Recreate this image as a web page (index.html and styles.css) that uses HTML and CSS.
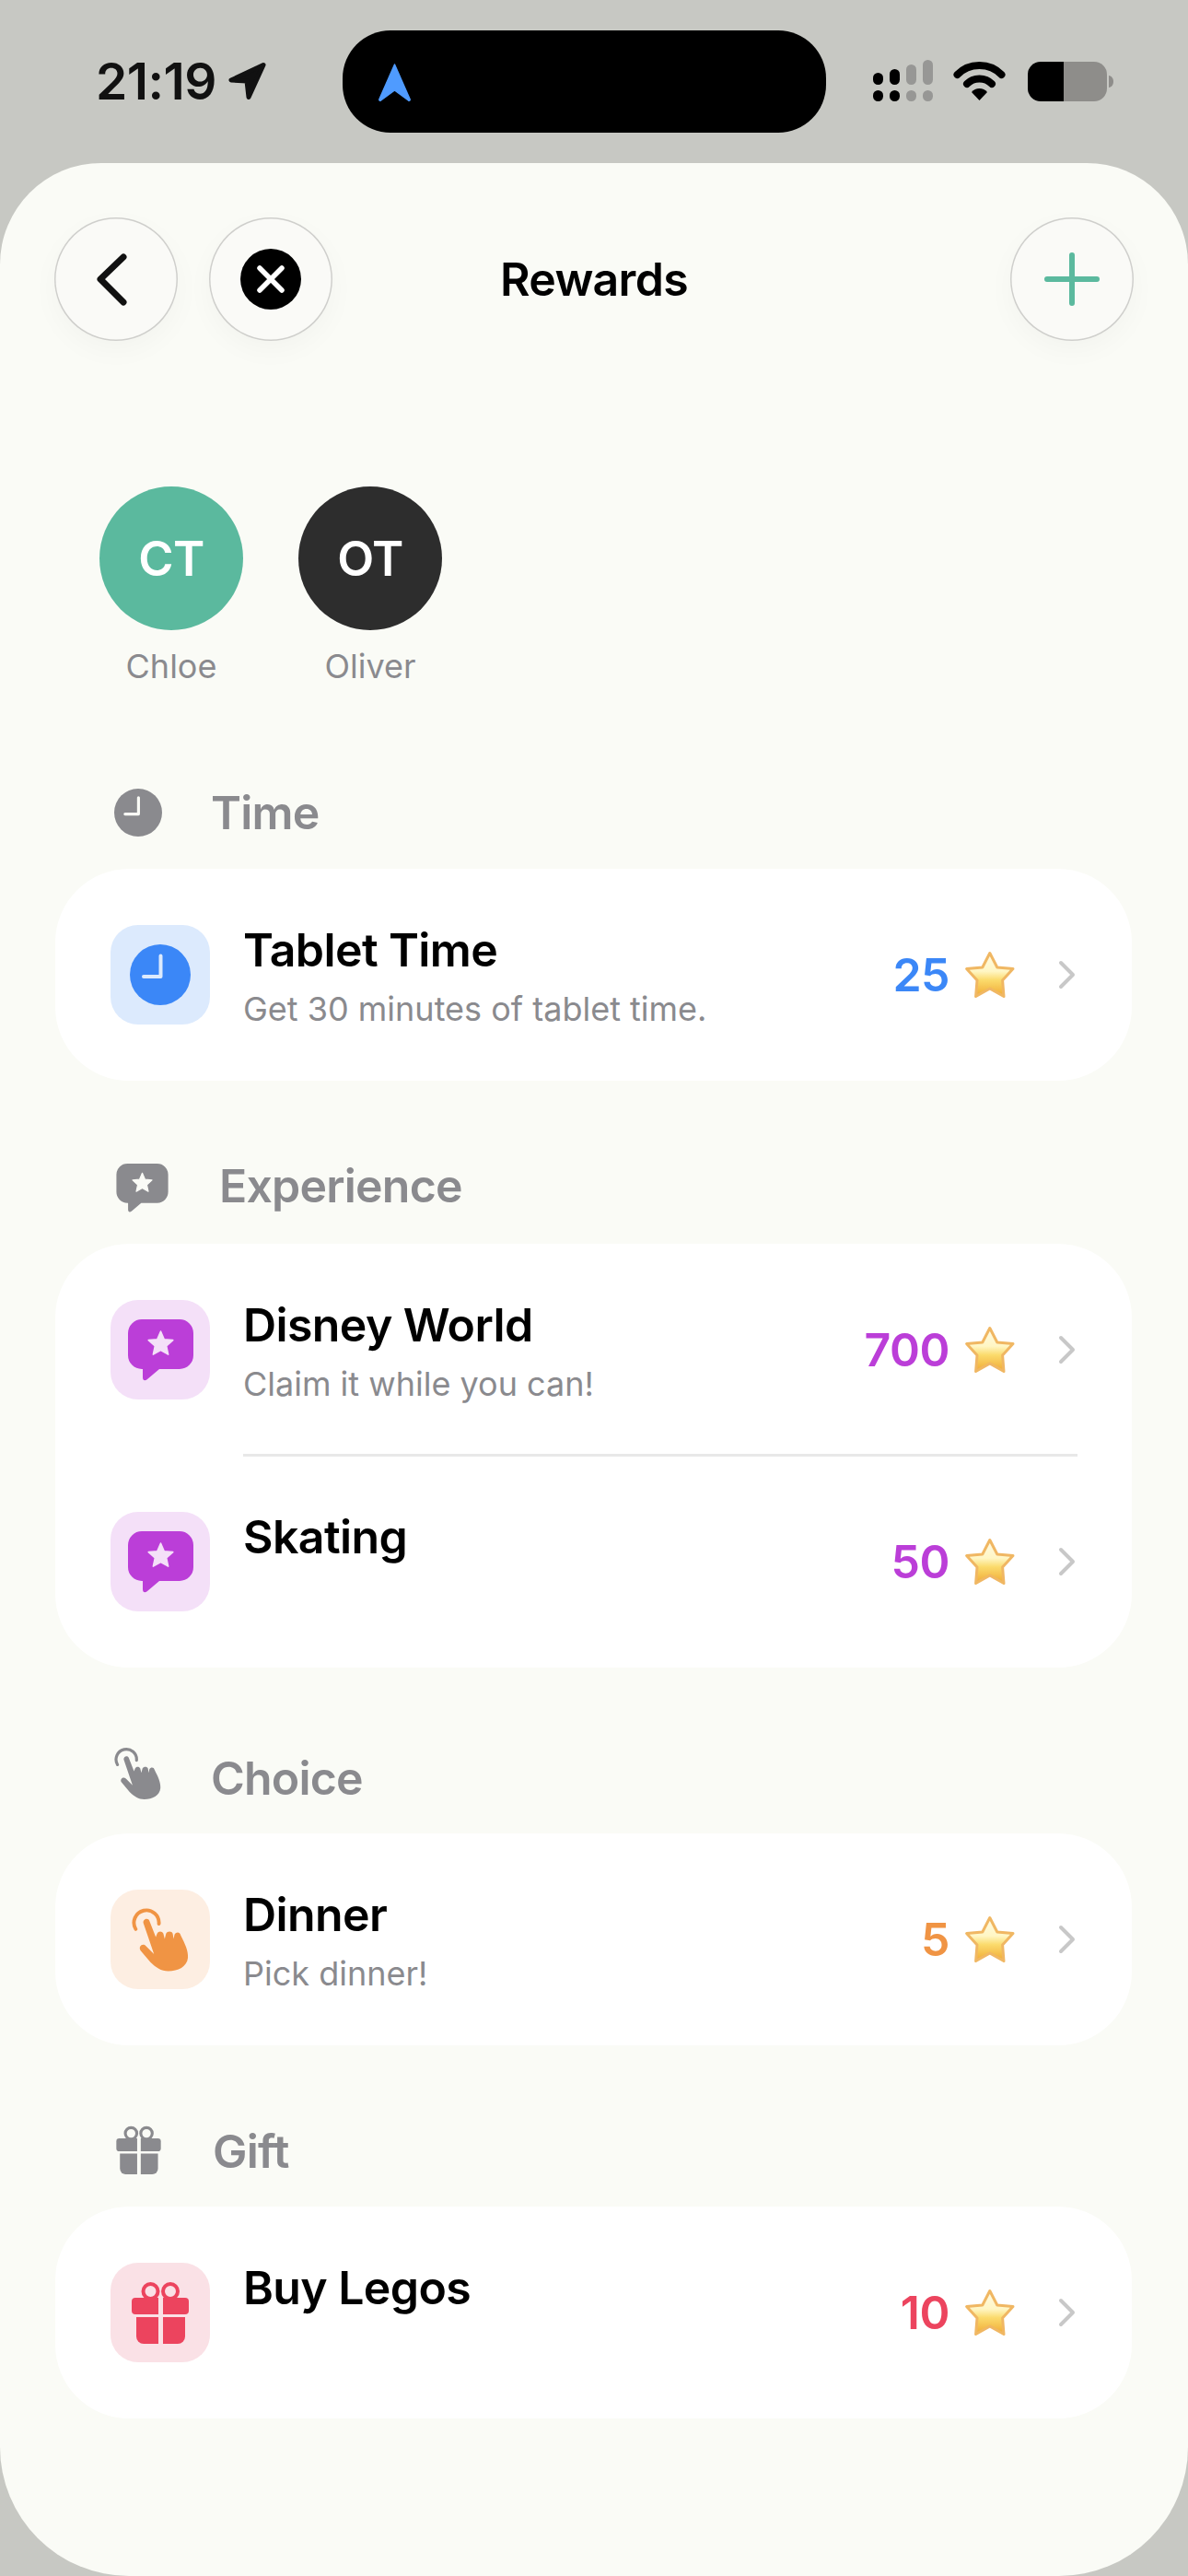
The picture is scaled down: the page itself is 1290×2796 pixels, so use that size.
FILE: index.html
```html
<!DOCTYPE html>
<html lang="en">
<head>
    <meta charset="UTF-8">
    <meta name="viewport" content="width=device-width, initial-scale=1.0">
    <title>Rewards</title>
    <link rel="stylesheet" href="styles.css">
</head>
<body>
    <svg class="defs" aria-hidden="true">
        <defs>
            <linearGradient id="starFill" x1="0" y1="0" x2="0" y2="1">
                <stop offset="0" stop-color="#fffbe6"/>
                <stop offset="0.42" stop-color="#fff6c4"/>
                <stop offset="0.62" stop-color="#fbdb6c"/>
                <stop offset="1" stop-color="#f0a934"/>
            </linearGradient>
            <symbol id="star" viewBox="0 0 56 52">
                <path d="M27.8 2.5 L35.8 18 L53 19.6 L41.6 32 L43 49.5 L27.8 41 L12.6 49.5 L14 32 L2.6 19.6 L19.8 18 Z" fill="url(#starFill)" stroke="#f0b763" stroke-width="3" stroke-linejoin="round"/>
            </symbol>
            <symbol id="clock" viewBox="0 0 66 66">
                <circle cx="33" cy="33" r="33" fill="currentColor"/>
                <path d="M33.5 12.5 V35 H15" fill="none" stroke="var(--hole)" stroke-width="4" stroke-linecap="round" stroke-linejoin="round"/>
            </symbol>
            <symbol id="bubble" viewBox="0 0 71 67">
                <path d="M15 0 H56 A15 15 0 0 1 71 15 V39 A15 15 0 0 1 56 54 H34 L21 65 C18.5 67.2 16 66.5 16 63 V54 H15 A15 15 0 0 1 0 39 V15 A15 15 0 0 1 15 0 Z" fill="currentColor"/>
                <path d="M35.5 13 L39.3 21.7 L48.8 22.6 L41.7 29 L43.7 38.2 L35.5 33.5 L27.3 38.2 L29.3 29 L22.2 22.6 L31.7 21.7 Z" fill="var(--hole)" stroke="var(--hole)" stroke-width="1.5" stroke-linejoin="round"/>
            </symbol>
            <symbol id="hand" viewBox="0 0 64 72">
                <path d="M4.5 24 A14 14 0 1 1 30.5 18" fill="none" stroke="currentColor" stroke-width="4" stroke-linecap="round"/>
                <path d="M13 17 C12.5 12.5 18.5 10.5 20 15 L27 33 L28.5 29 C30 26 34 26 35.5 29 L37 35 L38.5 29 C40 26 45 26 46 29 L47 35 L48 30 C50 27 54 27 55 31 C60 41 63.5 48 63 56 C62 66 52 71 41 71 C33 71 27 67 21 61 L10 48 C7 44 12 39 16 43 L25 52 Z" fill="currentColor"/>
            </symbol>
            <symbol id="gift" viewBox="0 0 62 68">
                <circle cx="20.5" cy="11" r="8" fill="none" stroke="currentColor" stroke-width="4"/>
                <circle cx="42" cy="11" r="8" fill="none" stroke="currentColor" stroke-width="4"/>
                <rect x="0" y="18" width="62" height="18" rx="4" fill="currentColor"/>
                <path d="M5 39 H58 V60 A8 8 0 0 1 50 68 H13 A8 8 0 0 1 5 60 Z" fill="currentColor"/>
                <rect x="29" y="17" width="5" height="51" fill="var(--hole)"/>
            </symbol>
            <symbol id="chevron" viewBox="0 0 20 34">
                <path d="M4 4 L17 17 L4 30" fill="none" stroke="#c8c8c8" stroke-width="4" stroke-linecap="round" stroke-linejoin="round"/>
            </symbol>
        </defs>
    </svg>

    <div class="status">
        <span class="clock-time">21:19</span>
        <svg class="loc" width="41" height="41" viewBox="0 0 41 41"><path d="M38 3.5 L3 20 L20 21 L22 38.5 Z" fill="#111" stroke="#111" stroke-width="5" stroke-linejoin="round"/></svg>
        <div class="pill">
            <svg width="37" height="42" viewBox="0 0 37 42"><path d="M18.5 2 L35 39.5 C35.6 41 34.5 41.6 33.5 41 L18.5 30 L3.5 41 C2.5 41.6 1.4 41 2 39.5 Z" fill="#4f9bff" stroke="#4f9bff" stroke-width="1.5" stroke-linejoin="round"/></svg>
        </div>
        <svg class="signal" width="65" height="45" viewBox="0 0 65 45">
            <rect x="0" y="14" width="11" height="13" rx="5.5" fill="#000"/>
            <rect x="0" y="33" width="11" height="12" rx="5.5" fill="#000"/>
            <rect x="18" y="10" width="11" height="17" rx="5.5" fill="#000"/>
            <rect x="18" y="33" width="11" height="12" rx="5.5" fill="#000"/>
            <rect x="36" y="5" width="11" height="22" rx="5.5" fill="#979795"/>
            <rect x="36" y="33" width="11" height="12" rx="5.5" fill="#979795"/>
            <rect x="54" y="0" width="11" height="27" rx="5.5" fill="#979795"/>
            <rect x="54" y="33" width="11" height="12" rx="5.5" fill="#979795"/>
        </svg>
        <svg class="wifi" width="57" height="43" viewBox="0 0 57 43">
            <path d="M4.5 15 C17 1.5 40 1.5 52.5 15" fill="none" stroke="#000" stroke-width="8" stroke-linecap="round"/>
            <path d="M15 25 C22 17.5 35 17.5 42 25" fill="none" stroke="#000" stroke-width="8" stroke-linecap="round"/>
            <path d="M20 34 C24 28.5 33 28.5 37 34 L28.5 43 Z" fill="#000"/>
        </svg>
        <svg class="battery" width="93" height="43" viewBox="0 0 93 43">
            <path d="M14 0 H39 V43 H14 A14 14 0 0 1 0 29 V14 A14 14 0 0 1 14 0 Z" fill="#000"/>
            <path d="M39 0 H72 A14 14 0 0 1 86 14 V29 A14 14 0 0 1 72 43 H39 Z" fill="#8e8d8a"/>
            <path d="M88 15 C91 15.5 93 18 93 21.5 C93 25 91 27.5 88 28 Z" fill="#8e8d8a"/>
        </svg>
    </div>

    <main class="sheet">
        <header class="topbar">
            <div class="topbar-left">
                <button class="round-btn" aria-label="Back">
                    <svg width="134" height="134" viewBox="0 0 134 134"><path d="M75 43 L50 67 L75 92" fill="none" stroke="#111" stroke-width="7" stroke-linecap="round" stroke-linejoin="round"/></svg>
                </button>
                <button class="round-btn" aria-label="Close">
                    <svg width="134" height="134" viewBox="0 0 134 134"><circle cx="67" cy="67" r="33" fill="#000"/><path d="M55 55 L79 79 M79 55 L55 79" stroke="#fff" stroke-width="5.5" stroke-linecap="round"/></svg>
                </button>
            </div>
            <h1 class="page-title">Rewards</h1>
            <div class="topbar-right">
                <button class="round-btn" aria-label="Add">
                    <svg width="134" height="134" viewBox="0 0 134 134"><path d="M67 41 V93 M40 67 H94" stroke="#5bb99e" stroke-width="6" stroke-linecap="round"/></svg>
                </button>
            </div>
        </header>

        <div class="kids">
            <div class="kid">
                <div class="avatar avatar-green">CT</div>
                <div class="kid-name">Chloe</div>
            </div>
            <div class="kid">
                <div class="avatar avatar-dark">OT</div>
                <div class="kid-name">Oliver</div>
            </div>
        </div>

        <section class="group group-time">
            <h2 class="group-head">
                <svg class="head-icon" width="52" height="52"><use href="#clock"/></svg>
                <span>Time</span>
            </h2>
            <div class="card blue">
                <div class="row">
                    <div class="tile"><svg width="66" height="66"><use href="#clock"/></svg></div>
                    <div class="row-text">
                        <div class="row-title">Tablet Time</div>
                        <div class="row-sub">Get 30 minutes of tablet time.</div>
                    </div>
                    <span class="points">25</span>
                    <svg class="star" width="56" height="52"><use href="#star"/></svg>
                    <svg class="chev" width="20" height="34"><use href="#chevron"/></svg>
                </div>
            </div>
        </section>

        <section class="group group-experience">
            <h2 class="group-head">
                <svg class="head-icon" width="57" height="53"><use href="#bubble"/></svg>
                <span>Experience</span>
            </h2>
            <div class="card purple">
                <div class="row">
                    <div class="tile"><svg width="71" height="67"><use href="#bubble"/></svg></div>
                    <div class="row-text">
                        <div class="row-title">Disney World</div>
                        <div class="row-sub">Claim it while you can!</div>
                    </div>
                    <span class="points">700</span>
                    <svg class="star" width="56" height="52"><use href="#star"/></svg>
                    <svg class="chev" width="20" height="34"><use href="#chevron"/></svg>
                </div>
                <div class="divider"></div>
                <div class="row">
                    <div class="tile"><svg width="71" height="67"><use href="#bubble"/></svg></div>
                    <div class="row-text">
                        <div class="row-title">Skating</div>
                    </div>
                    <span class="points">50</span>
                    <svg class="star" width="56" height="52"><use href="#star"/></svg>
                    <svg class="chev" width="20" height="34"><use href="#chevron"/></svg>
                </div>
            </div>
        </section>

        <section class="group group-choice">
            <h2 class="group-head">
                <svg class="head-icon" width="51" height="58"><use href="#hand"/></svg>
                <span>Choice</span>
            </h2>
            <div class="card orange">
                <div class="row">
                    <div class="tile"><svg width="62" height="71"><use href="#hand"/></svg></div>
                    <div class="row-text">
                        <div class="row-title">Dinner</div>
                        <div class="row-sub">Pick dinner!</div>
                    </div>
                    <span class="points">5</span>
                    <svg class="star" width="56" height="52"><use href="#star"/></svg>
                    <svg class="chev" width="20" height="34"><use href="#chevron"/></svg>
                </div>
            </div>
        </section>

        <section class="group group-gift">
            <h2 class="group-head">
                <svg class="head-icon" width="49" height="53"><use href="#gift"/></svg>
                <span>Gift</span>
            </h2>
            <div class="card red">
                <div class="row">
                    <div class="tile"><svg width="62" height="68"><use href="#gift"/></svg></div>
                    <div class="row-text">
                        <div class="row-title">Buy Legos</div>
                    </div>
                    <span class="points">10</span>
                    <svg class="star" width="56" height="52"><use href="#star"/></svg>
                    <svg class="chev" width="20" height="34"><use href="#chevron"/></svg>
                </div>
            </div>
        </section>
    </main>
</body>
</html>
```

FILE: styles.css
```css
* {
    box-sizing: border-box;
}

body {
    margin: 0;
    height: 2796px;
    overflow: hidden;
    background-color: #c7c8c3;
    font-family: Inter, "Noto Sans", sans-serif;
    color: #000;
}

.defs {
    display: block;
    width: 0;
    height: 0;
}

/* status bar */
.status {
    display: flex;
    align-items: center;
    height: 177px;
    padding-left: 104px;
}

.clock-time {
    width: 130px;
    font-size: 55px;
    font-weight: 600;
    letter-spacing: -0.5px;
    line-height: 60px;
    color: #111;
    margin-bottom: 2px;
}

.loc {
    margin-left: 14px;
    margin-bottom: 2px;
}

.pill {
    display: flex;
    align-items: center;
    width: 525px;
    height: 111px;
    margin-left: 83px;
    padding-left: 38px;
    background: #000;
    border-radius: 52px;
}

.signal {
    margin-left: 51px;
    margin-bottom: 2px;
}

.wifi {
    margin-left: 22px;
    margin-bottom: 2px;
}

.battery {
    margin-left: 24px;
    margin-bottom: 1px;
}

/* main sheet */
.sheet {
    height: 2619px;
    background-color: #fafbf6;
    border-radius: 110px 110px 140px 140px;
    overflow: hidden;
}

.topbar {
    display: grid;
    grid-template-columns: 1fr auto 1fr;
    align-items: center;
    margin: 59px 59px 0;
}

.topbar-left {
    display: flex;
    gap: 34px;
}

.topbar-right {
    display: flex;
    justify-content: flex-end;
}

.round-btn {
    width: 134px;
    height: 134px;
    padding: 0;
    background-color: #fafaf7;
    border: 0;
    border-radius: 50%;
    box-shadow: inset 0 0 0 1.5px #cfcfcc, 0 10px 30px rgba(0, 0, 0, 0.03);
}

.round-btn svg {
    display: block;
}

.page-title {
    margin: 0;
    font-size: 50px;
    font-weight: 600;
    letter-spacing: -0.7px;
    line-height: 60px;
}

/* kids */
.kids {
    display: flex;
    gap: 60px;
    margin: 158px 0 0 108px;
}

.kid {
    width: 156px;
    text-align: center;
}

.avatar {
    display: flex;
    align-items: center;
    justify-content: center;
    height: 156px;
    border-radius: 50%;
    color: #fff;
    font-size: 52px;
    font-weight: 600;
    letter-spacing: -0.5px;
}

.avatar-green {
    background-color: #5bb99e;
}

.avatar-dark {
    background-color: #2d2d2d;
}

.kid-name {
    margin-top: 17px;
    font-size: 36px;
    line-height: 44px;
    color: #8a8a8e;
}

/* groups */
.group {
    padding: 0 61px 0 60px;
    margin-top: 107px;
}

.group-head {
    display: flex;
    align-items: center;
    height: 60px;
    margin: 0 0 31px;
    padding-left: 64px;
    gap: 53px;
    font-size: 50px;
    font-weight: 600;
    letter-spacing: -0.8px;
    line-height: 60px;
    color: #8a8a8e;
    --hole: #fafbf6;
}

.group-experience {
    margin-top: 84px;
}

.group-experience .group-head {
    margin-bottom: 33px;
    padding-left: 66px;
    gap: 55px;
}

.group-experience .head-icon {
    margin-top: 4px;
}

.group-choice {
    margin-top: 90px;
}

.group-choice .group-head {
    margin-bottom: 30px;
    gap: 54px;
}

.group-choice .head-icon {
    margin-bottom: 10px;
}

.group-gift {
    margin-top: 85px;
}

.group-gift .group-head {
    margin-bottom: 30px;
    padding-left: 66px;
    gap: 56px;
}

.group-gift .head-icon {
    margin-bottom: 3px;
}

.card {
    padding: 1px 0;
    background-color: #fff;
    border-radius: 80px;
}

.row {
    display: flex;
    align-items: center;
    padding: 60px 59px 60px 60px;
}

.divider {
    height: 3px;
    margin: -1px 59px 0 204px;
    background-color: #e8e8e8;
}

.tile {
    display: flex;
    align-items: center;
    justify-content: center;
    flex: none;
    width: 108px;
    height: 108px;
    border-radius: 30px;
}

.row-text {
    flex: 1;
    align-self: flex-start;
    height: 108px;
    margin: -3px 0 0 36px;
}

.row-title {
    font-size: 50px;
    font-weight: 600;
    letter-spacing: -0.6px;
    line-height: 60px;
    color: #000;
}

.row-sub {
    margin-top: 12px;
    font-size: 36px;
    line-height: 44px;
    color: #8a8a8e;
}

.points {
    font-size: 50px;
    font-weight: 600;
    letter-spacing: -0.5px;
    line-height: 60px;
}

.star {
    margin: 0 45px 0 16px;
}

.chev {
    flex: none;
    margin-right: 2px;
}

.blue {
    color: #3b87f7;
    --hole: #dceafd;
}

.blue .tile {
    background-color: #dceafd;
}

.purple {
    color: #bb3ed8;
    --hole: #f4e0f8;
}

.purple .tile {
    background-color: #f4e0f8;
}

.orange {
    color: #f09444;
    --hole: #fdeee2;
}

.orange .tile {
    background-color: #fdeee2;
}

.red {
    color: #ec445e;
    --hole: #fae1e6;
}

.red .tile {
    background-color: #fae1e6;
}
```
